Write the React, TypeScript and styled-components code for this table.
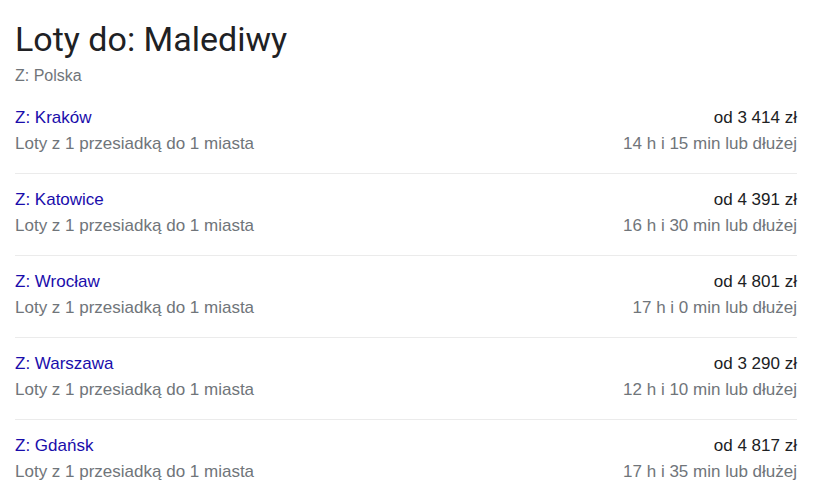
import React from 'react';
import styled, { createGlobalStyle } from 'styled-components';

const FLIGHTS = [
  { city: 'Kraków', price: 'od 3 414 zł', duration: '14 h i 15 min lub dłużej' },
  { city: 'Katowice', price: 'od 4 391 zł', duration: '16 h i 30 min lub dłużej' },
  { city: 'Wrocław', price: 'od 4 801 zł', duration: '17 h i 0 min lub dłużej' },
  { city: 'Warszawa', price: 'od 3 290 zł', duration: '12 h i 10 min lub dłużej' },
  { city: 'Gdańsk', price: 'od 4 817 zł', duration: '17 h i 35 min lub dłużej' },
];

const GlobalStyle = createGlobalStyle`
  body {
    margin: 0;
    background: #fff;
    font-family: 'Liberation Sans', Arial, sans-serif;
  }
`;

export default function App() {
  return (
    <>
      <GlobalStyle />
      <Wrapper>
        <Title>Loty do: Malediwy</Title>
        <Origin>Z: Polska</Origin>
        <List>
          {FLIGHTS.map((f, idx) => (
            <Row key={f.city} last={idx === FLIGHTS.length - 1}>
              <Line>
                <City>Z: {f.city}</City>
                <Price>{f.price}</Price>
              </Line>
              <Line>
                <Muted>Loty z 1 przesiadką do 1 miasta</Muted>
                <Muted>{f.duration}</Muted>
              </Line>
            </Row>
          ))}
        </List>
      </Wrapper>
    </>
  );
}

const Wrapper = styled.div`
  width: 782px;
  padding: 19px 0 0 15px;
`;

const Title = styled.h1`
  margin: 0;
  font-family: 'Roboto', 'Open Sans', sans-serif;
  font-weight: 400;
  font-size: 34px;
  line-height: 40px;
  color: #202124;
`;

const Origin = styled.div`
  margin-top: 6px;
  font-size: 16px;
  line-height: 22px;
  color: #70757a;
`;

const List = styled.div`
  margin-top: 18px;
`;

const Row = styled.div<{ last: boolean }>`
  padding: 13px 0 16px;
  border-bottom: ${(p) => (p.last ? 'none' : '1px solid #ebebeb')};
  &:first-child {
    padding-top: 0;
  }
`;

const Line = styled.div`
  display: flex;
  justify-content: space-between;
  align-items: baseline;
  font-size: 17px;
  line-height: 26px;
`;

const City = styled.span`
  color: #1a0dab;
`;

const Price = styled.span`
  color: #202124;
`;

const Muted = styled.span`
  color: #70757a;
`;
